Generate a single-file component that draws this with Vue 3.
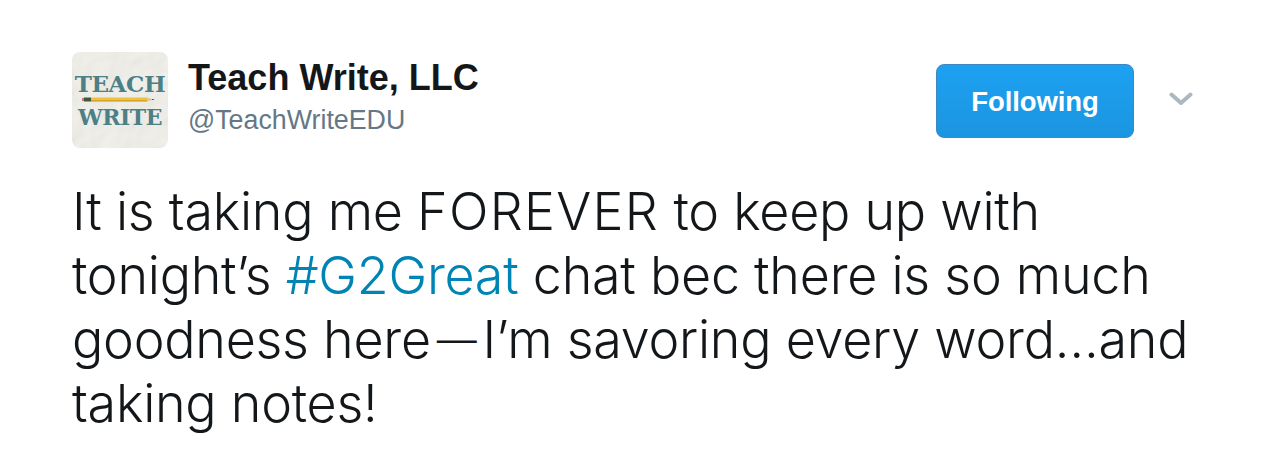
<script setup>
const name = 'Teach Write, LLC'
const handle = '@TeachWriteEDU'
</script>

<template>
  <div class="tweet">
    <div class="tweet-head">
      <div class="avatar">
        <!-- crumpled paper -->
        <svg class="paper" width="96" height="96">
          <filter id="crumple">
            <feTurbulence type="fractalNoise" baseFrequency="0.03" numOctaves="3" seed="7" />
            <feDiffuseLighting lighting-color="#f0efe9" surfaceScale="1.2" diffuseConstant="1.08">
              <feDistantLight azimuth="45" elevation="64" />
            </feDiffuseLighting>
          </filter>
          <rect width="96" height="96" filter="url(#crumple)" />
        </svg>
        <span class="avatar-word word-top">TEACH</span>
        <svg class="pencil" viewBox="0 0 76 5" width="76" height="5">
          <rect x="0" y="1" width="2" height="3" fill="#c9787a" />
          <rect x="2" y="0.5" width="7" height="4" fill="#3c5a3a" />
          <rect x="9" y="0.5" width="56" height="4" fill="#eec23c" />
          <rect x="9" y="3" width="56" height="1.5" fill="#d9a52c" />
          <polygon points="65,0.5 72,2.5 65,4.5" fill="#d8c9a0" />
          <polygon points="70,1.9 73,2.5 70,3.1" fill="#333" />
        </svg>
        <span class="avatar-word">WRITE</span>
      </div>
      <div class="names">
        <div class="fullname">{{ name }}</div>
        <div class="handle">{{ handle }}</div>
      </div>
      <button class="follow-btn">Following</button>
      <svg class="chevron" viewBox="0 0 24 14" width="24" height="14">
        <path d="M2.5 2.5 L12 11 L21.5 2.5" fill="none" stroke="#aab8c2" stroke-width="4" stroke-linecap="round" stroke-linejoin="round" />
      </svg>
    </div>
    <p class="tweet-text">It is taking me <span class="caps">FOREVER</span> to keep up with<br />tonight’s <a class="hashtag">#G2Great</a> chat bec there is so much<br />goodness here<span class="dash">—</span>I’m savoring every word…and<br />taking notes!</p>
  </div>
</template>

<style scoped>
.tweet {
  width: 1262px;
  height: 454px;
  box-sizing: border-box;
  padding: 52px 60px 0 72px;
  background: #fff;
  overflow: hidden;
}

.tweet-head {
  display: flex;
  align-items: flex-start;
}

.avatar {
  position: relative;
  width: 96px;
  height: 96px;
  flex: none;
  border-radius: 8px;
  overflow: hidden;
  display: flex;
  flex-direction: column;
  align-items: center;
  justify-content: center;
  color: #4d7f87;
  font-family: "DejaVu Serif", serif;
  font-weight: 700;
}

.paper {
  position: absolute;
  top: 0;
  left: 0;
}

.avatar-word {
  position: relative;
  font-size: 22px;
  line-height: 24px;
  letter-spacing: -0.5px;
}

.word-top {
  font-size: 23px;
  letter-spacing: -0.4px;
}

.pencil {
  position: relative;
  margin: 1px 0 3px;
}

.names {
  margin-left: 20px;
  flex: 1;
}

.fullname {
  margin-top: 6px;
  font-family: "Liberation Sans", Arial, sans-serif;
  font-weight: 700;
  font-size: 36px;
  line-height: 40px;
  color: #14171a;
}

.handle {
  margin-top: 4px;
  font-family: "Liberation Sans", Arial, sans-serif;
  font-size: 26.8px;
  line-height: 36px;
  color: #657786;
}

.follow-btn {
  width: 198px;
  height: 74px;
  margin-top: 12px;
  padding-top: 3px;
  flex: none;
  border: 1px solid #3b88c3;
  border-radius: 8px;
  background: linear-gradient(#1da1f2, #1b95e0);
  color: #fff;
  font-family: "Liberation Sans", Arial, sans-serif;
  font-weight: 700;
  font-size: 27.5px;
  letter-spacing: -0.1px;
}

.chevron {
  margin: 40px 9px 0 35px;
  flex: none;
}

.tweet-text {
  margin: 32px 0 0;
  font-family: Inter, "Liberation Sans", sans-serif;
  font-weight: 300;
  font-size: 52px;
  line-height: 64px;
  letter-spacing: -0.25px;
  color: #14171a;
  white-space: nowrap;
}

.caps {
  letter-spacing: 1.3px;
}

/* the em dash is shorter in the reference, with air on both sides */
.dash {
  margin: 0 6px;
  font-size: 40px;
  line-height: 1;
  vertical-align: 4px;
}

.hashtag {
  color: #0084b4;
}
</style>
